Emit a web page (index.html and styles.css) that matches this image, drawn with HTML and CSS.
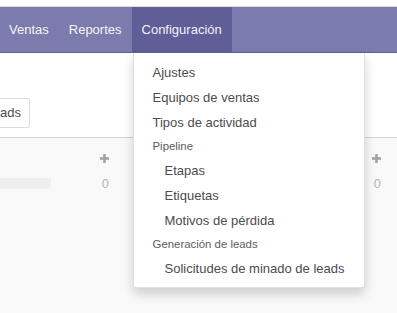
FILE: index.html
```html
<!DOCTYPE html>
<html lang="es">
<head>
<meta charset="utf-8">
<title>Configuración</title>
<link rel="stylesheet" href="styles.css">
</head>
<body>
<div class="topbar"></div>
<nav class="navbar">
  <a class="nav-item first">Ventas</a>
  <a class="nav-item">Reportes</a>
  <div class="nav-dropdown">
    <a class="nav-item active">Configuración</a>
    <div class="dropdown-menu">
      <a class="dd-item">Ajustes</a>
      <a class="dd-item">Equipos de ventas</a>
      <a class="dd-item">Tipos de actividad</a>
      <div class="dd-header">Pipeline</div>
      <a class="dd-item sub">Etapas</a>
      <a class="dd-item sub">Etiquetas</a>
      <a class="dd-item sub">Motivos de pérdida</a>
      <div class="dd-header">Generación de leads</div>
      <a class="dd-item sub">Solicitudes de minado de leads</a>
    </div>
  </div>
</nav>
<div class="control-panel">
  <button class="btn">ads</button>
</div>
<div class="kanban">
  <div class="column">
    <div class="col-header">
      <svg class="plus" width="9" height="9" viewBox="0 0 9 9"><rect x="3.2" y="0" width="2.6" height="9"/><rect x="0" y="3.2" width="9" height="2.6"/></svg>
    </div>
    <div class="progress-row">
      <div class="bar"></div>
      <div class="counter">0</div>
    </div>
  </div>
  <div class="column">
    <div class="col-header">
      <svg class="plus" width="9" height="9" viewBox="0 0 9 9"><rect x="3.2" y="0" width="2.6" height="9"/><rect x="0" y="3.2" width="9" height="2.6"/></svg>
    </div>
    <div class="progress-row">
      <div class="bar"></div>
      <div class="counter">0</div>
    </div>
  </div>
</div>
</body>
</html>
```
FILE: styles.css
```css
html, body {
  margin: 0;
  padding: 0;
  background: #f9f9f9;
}
body {
  font-family: "Liberation Sans", Arial, sans-serif;
  font-size: 13px;
  overflow: hidden;
  min-height: 100vh;
}
.topbar {
  height: 6px;
  background: #fff;
  border-bottom: 1px solid #dcdcdc;
}
.navbar {
  display: flex;
  height: 45px;
  background: #7c7bad;
  border-bottom: 1px solid #5f5e97;
  position: relative;
  z-index: 5;
}
.nav-item {
  display: flex;
  align-items: center;
  padding: 0 10px;
  height: 45px;
  color: rgba(255, 255, 255, 0.95);
  font-size: 13px;
  text-decoration: none;
}
.nav-item.first {
  padding-left: 9px;
}
.nav-item.active {
  background: #5f5e97;
}
.nav-dropdown {
  position: relative;
}
.dropdown-menu {
  position: absolute;
  top: 46px;
  left: 1px;
  width: 230px;
  background: #fff;
  border: 1px solid rgba(0, 0, 0, 0.12);
  border-top: none;
  border-radius: 0 0 3px 3px;
  box-shadow: 0 6px 12px rgba(0, 0, 0, 0.175);
  padding: 7px 0 6px;
  display: flex;
  flex-direction: column;
}
.dd-item {
  display: block;
  height: 25px;
  line-height: 25px;
  padding-left: 19px;
  color: #4c4c4c;
  font-size: 13px;
  white-space: nowrap;
}
.dd-item.sub {
  padding-left: 31px;
}
.dd-header {
  padding: 3px 0 3px 19px;
  line-height: 17px;
  font-size: 11.4px;
  color: #5c5c5c;
}
.control-panel {
  background: #fff;
  padding: 45px 0 9px;
  border-bottom: 1px solid #d2d2d2;
}
.btn {
  display: block;
  height: 30px;
  margin: 0;
  padding: 0 8px 0 0;
  font-family: "Liberation Sans", Arial, sans-serif;
  font-size: 13px;
  line-height: 28px;
  color: #4c4c4c;
  background: #fff;
  border: 1px solid #dcdcdc;
  border-left: none;
  border-radius: 0 3px 3px 0;
}
.kanban {
  display: flex;
  margin-left: -154px;
}
.column {
  flex: 0 0 272px;
  box-sizing: border-box;
  padding: 0 8px 0 16px;
}
.col-header {
  height: 40px;
  display: flex;
  align-items: center;
  justify-content: flex-end;
  padding-right: 1px;
}
.plus {
  fill: #a3a3a3;
  display: block;
}
.progress-row {
  display: flex;
  align-items: center;
  height: 11px;
}
.bar {
  flex: 1;
  height: 11px;
  background: #eeeeee;
  border-radius: 3px;
}
.counter {
  width: 50px;
  margin-left: 8px;
  text-align: right;
  color: #b5b5b5;
  font-size: 13px;
  line-height: 11px;
  padding-right: 1px;
}
```
